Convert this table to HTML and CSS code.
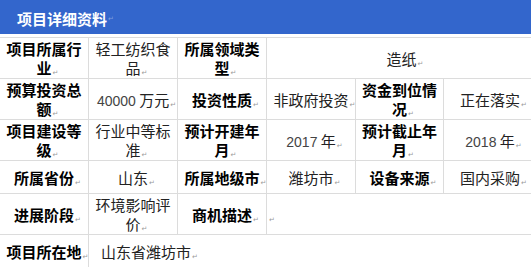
FILE: index.html
```html
<!DOCTYPE html>
<html lang="zh">
<head>
<meta charset="utf-8">
<link rel="stylesheet" href="styles.css">
</head>
<body>
<div class="titlebar"><span class="title">项目详细资料</span><span class="pm pm-title">↵</span></div>
<table class="info">
  <colgroup>
    <col class="c1"><col class="c2"><col class="c3"><col class="c4"><col class="c5"><col class="c6">
  </colgroup>
  <tr class="tall">
    <th>项目所属行业<span class="pm">↵</span></th>
    <td>轻工纺织食品<span class="pm">↵</span></td>
    <th>所属领域类型<span class="pm">↵</span></th>
    <td colspan="3">造纸<span class="pm">↵</span></td>
  </tr>
  <tr class="tall">
    <th>预算投资总额<span class="pm">↵</span></th>
    <td><span class="num">40000</span> 万元<span class="pm">↵</span></td>
    <th>投资性质<span class="pm">↵</span></th>
    <td>非政府投资<span class="pm">↵</span></td>
    <th>资金到位情况<span class="pm">↵</span></th>
    <td>正在落实<span class="pm">↵</span></td>
  </tr>
  <tr class="tall">
    <th>项目建设等级<span class="pm">↵</span></th>
    <td>行业中等标准<span class="pm">↵</span></td>
    <th>预计开建年月<span class="pm">↵</span></th>
    <td><span class="num">2017</span> 年<span class="pm">↵</span></td>
    <th>预计截止年月<span class="pm">↵</span></th>
    <td><span class="num">2018</span> 年<span class="pm">↵</span></td>
  </tr>
  <tr>
    <th>所属省份<span class="pm">↵</span></th>
    <td>山东<span class="pm">↵</span></td>
    <th>所属地级市<span class="pm">↵</span></th>
    <td>潍坊市<span class="pm">↵</span></td>
    <th>设备来源<span class="pm">↵</span></th>
    <td>国内采购<span class="pm">↵</span></td>
  </tr>
  <tr class="tall">
    <th>进展阶段<span class="pm">↵</span></th>
    <td>环境影响评价<span class="pm">↵</span></td>
    <th>商机描述<span class="pm">↵</span></th>
    <td colspan="3" class="left"><span class="pm">↵</span></td>
  </tr>
  <tr>
    <th>项目所在地<span class="pm">↵</span></th>
    <td colspan="5" class="addr">山东省潍坊市<span class="pm">↵</span></td>
  </tr>
</table>
</body>
</html>
```
FILE: styles.css
```css
html, body {
  margin: 0;
  padding: 0;
  overflow: hidden;
  background: #ffffff;
}
body {
  width: 531px;
  font-family: "Noto Sans CJK SC", "Noto Sans", sans-serif;
}
.titlebar {
  height: 34px;
  box-sizing: border-box;
  background: #3366cc;
  display: flex;
  align-items: center;
  padding: 4px 0 0 17px;
  margin-bottom: 3px;
}
.title {
  color: #ffffff;
  font-weight: 700;
  font-size: 15px;
  line-height: 20px;
}
.pm {
  font-family: "DejaVu Sans", sans-serif;
  font-size: 7px;
  line-height: 0;
  color: #9a9a9a;
  font-weight: 400;
  vertical-align: -1px;
  margin-left: 1px;
  margin-right: -7px;
}
.pm-title {
  color: #7f9fdf;
}
.info {
  border-collapse: collapse;
  table-layout: fixed;
  width: 537px;
  margin-left: -1px;
}
.c1 { width: 89px; }
.c2 { width: 89px; }
.c3 { width: 89px; }
.c4 { width: 89px; }
.c5 { width: 88px; }
.c6 { width: 93px; }
.info th,
.info td {
  border: 1px solid #dcdcdc;
  padding: 0 3px;
  height: 32px;
  font-size: 15px;
  line-height: 19px;
  text-align: center;
  vertical-align: middle;
  word-break: break-all;
  overflow: hidden;
}
.info tr.tall th,
.info tr.tall td {
  height: 40px;
}
.info th {
  font-weight: 700;
  color: #000000;
}
.info td {
  font-weight: 400;
  color: #222222;
}
.num {
  font-family: "Liberation Sans", Arial, sans-serif;
  font-size: 14px;
  line-height: 0;
  color: #444444;
}
.info td.left {
  text-align: left;
  padding-left: 1px;
}
.info td.addr {
  text-align: left;
  padding-left: 12px;
}
```
